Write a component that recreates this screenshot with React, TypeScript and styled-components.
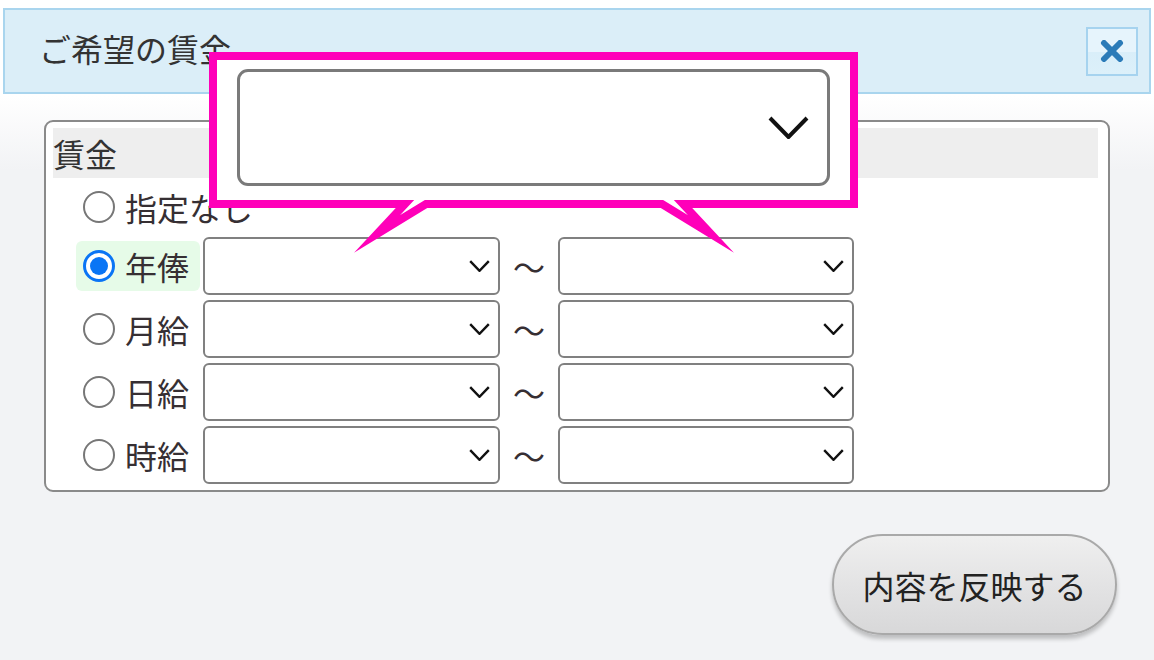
import React from "react";
import styled, { createGlobalStyle } from "styled-components";

const GlobalStyle = createGlobalStyle`
  html, body {
    margin: 0;
    padding: 0;
    background: #f2f3f5;
  }
  body {
    font-family: "Noto Sans CJK JP", "Noto Sans", sans-serif;
    color: #333;
  }
`;

const Page = styled.div`
  position: relative;
  width: 1154px;
  height: 660px;
  padding-top: 8px;
  box-sizing: border-box;
  overflow: hidden;
  background: linear-gradient(to bottom, #ffffff 0, #ffffff 96px, #f2f3f5 170px);
`;

const Header = styled.div`
  margin: 0 3px;
  height: 86px;
  box-sizing: border-box;
  border: 2px solid #a9d5ee;
  background: #dbeef8;
  display: flex;
  align-items: center;
  justify-content: space-between;
  padding: 0 11px 0 34px;
`;

const Title = styled.h1`
  margin: 0 0 6px;
  font-size: 32px;
  font-weight: 400;
  color: #333;
`;

const CloseButton = styled.button`
  width: 52px;
  height: 49px;
  box-sizing: border-box;
  border: 2px solid #a6d3ef;
  background: linear-gradient(to bottom, #e6f4fc 0, #e6f4fc 50%, #d9eef9 52%, #dcf0fa 100%);
  display: flex;
  align-items: center;
  justify-content: center;
  padding: 0;
  cursor: pointer;
`;

const Fieldset = styled.div`
  margin: 26px 44px 0;
  border: 2px solid #8a8a8a;
  border-radius: 9px;
  background: #fff;
  padding: 6px 10px 6px 7px;
`;

const Legend = styled.div`
  height: 50px;
  background: #eeeeee;
  font-size: 32px;
  line-height: 50px;
  color: #333;
`;

const Rows = styled.div`
  display: flex;
  flex-direction: column;
  gap: 5px;
  padding: 4px 0 0 23px;
`;

const Row = styled.div<{ $short?: boolean }>`
  height: ${(p) => (p.$short ? 50 : 58)}px;
  display: flex;
  align-items: center;
`;

const LabelCell = styled.label<{ $active?: boolean }>`
  width: 124px;
  height: 50px;
  margin-right: 3px;
  border-radius: 6px;
  background: ${(p) => (p.$active ? "#e6fbe8" : "transparent")};
  display: flex;
  align-items: center;
  padding-left: 7px;
  box-sizing: border-box;
  gap: 10px;
  font-size: 32px;
  color: #362f33;
  white-space: nowrap;
`;

const Radio = styled.span<{ $checked?: boolean }>`
  flex: none;
  width: 32px;
  height: 32px;
  box-sizing: border-box;
  border-radius: 50%;
  border: ${(p) => (p.$checked ? "3px solid #0a75f5" : "2px solid #777")};
  background: #fff;
  display: flex;
  align-items: center;
  justify-content: center;
  &::after {
    content: "";
    display: ${(p) => (p.$checked ? "block" : "none")};
    width: 18px;
    height: 18px;
    border-radius: 50%;
    background: #0a75f5;
  }
`;

const Select = styled.div<{ $w: number }>`
  width: ${(p) => p.$w}px;
  height: 58px;
  box-sizing: border-box;
  border: 2px solid #808080;
  border-radius: 6px;
  background: #fff;
  display: flex;
  align-items: center;
  justify-content: flex-end;
  padding-right: 8px;
`;

const Tilde = styled.span`
  width: 58px;
  text-align: center;
  font-size: 32px;
  color: #362f33;
  line-height: 1;
`;

const Footer = styled.div`
  display: flex;
  justify-content: flex-end;
  padding: 42px 37px 0 0;
`;

const ApplyButton = styled.button`
  width: 285px;
  height: 101px;
  border-radius: 51px;
  border: 2px solid #a9a9a9;
  background: linear-gradient(to bottom, #efefef 0, #e2e2e3 55%, #d8d8d9 100%);
  box-shadow: 0 4px 4px rgba(0, 0, 0, 0.22);
  font-family: "Noto Sans CJK JP", sans-serif;
  font-size: 32px;
  color: #222;
  cursor: pointer;
`;

const Callout = styled.div`
  position: absolute;
  left: 209px;
  top: 52px;
  width: 650px;
  height: 205px;
`;

const CalloutShape = styled.svg`
  position: absolute;
  left: 0;
  top: 0;
  overflow: visible;
`;

const BigSelect = styled.div`
  position: absolute;
  left: 28px;
  top: 17px;
  width: 593px;
  height: 117px;
  box-sizing: border-box;
  border: 3px solid #7a7a7a;
  border-radius: 11px;
  background: #fff;
  display: flex;
  align-items: center;
  justify-content: flex-end;
  padding-right: 18px;
`;

const Chevron = ({ w, h, sw }: { w: number; h: number; sw: number }) => (
  <svg width={w} height={h} viewBox={`0 0 ${w} ${h}`}>
    <polyline
      points={`${sw / 2},${sw / 2} ${w / 2},${h - sw / 2} ${w - sw / 2},${sw / 2}`}
      fill="none"
      stroke="#111"
      strokeWidth={sw}
    />
  </svg>
);

const CloseIcon = () => (
  <svg width="24" height="22" viewBox="0 0 24 22">
    <path d="M4 3 L20 19 M20 3 L4 19" stroke="#2b7bb8" strokeWidth="6" strokeLinecap="round" />
  </svg>
);

const rows = [
  { label: "年俸", checked: true },
  { label: "月給", checked: false },
  { label: "日給", checked: false },
  { label: "時給", checked: false },
];

function App() {
  return (
    <Page>
      <GlobalStyle />
      <Header>
        <Title>ご希望の賃金</Title>
        <CloseButton aria-label="閉じる">
          <CloseIcon />
        </CloseButton>
      </Header>

      <Fieldset>
        <Legend>賃金</Legend>
        <Rows>
          <Row $short>
            <LabelCell>
              <Radio />
              指定なし
            </LabelCell>
          </Row>
          {rows.map((r) => (
            <Row key={r.label}>
              <LabelCell $active={r.checked}>
                <Radio $checked={r.checked} />
                {r.label}
              </LabelCell>
              <Select $w={297}>
                <Chevron w={21} h={12} sw={2.4} />
              </Select>
              <Tilde>〜</Tilde>
              <Select $w={296}>
                <Chevron w={21} h={12} sw={2.4} />
              </Select>
            </Row>
          ))}
        </Rows>
      </Fieldset>

      <Footer>
        <ApplyButton>内容を反映する</ApplyButton>
      </Footer>

      <Callout>
        <CalloutShape width="650" height="205" viewBox="0 0 650 205">
          <path
            d="M4 4 H645 V152 H474 L502 182 L453 152 H217 L168 182 L196 152 H4 Z"
            fill="#fff"
            stroke="#ff00b9"
            strokeWidth="8"
            strokeLinejoin="miter"
            strokeMiterlimit="12"
          />
        </CalloutShape>
        <BigSelect>
          <Chevron w={41} h={23} sw={4} />
        </BigSelect>
      </Callout>
    </Page>
  );
}

export default App;
